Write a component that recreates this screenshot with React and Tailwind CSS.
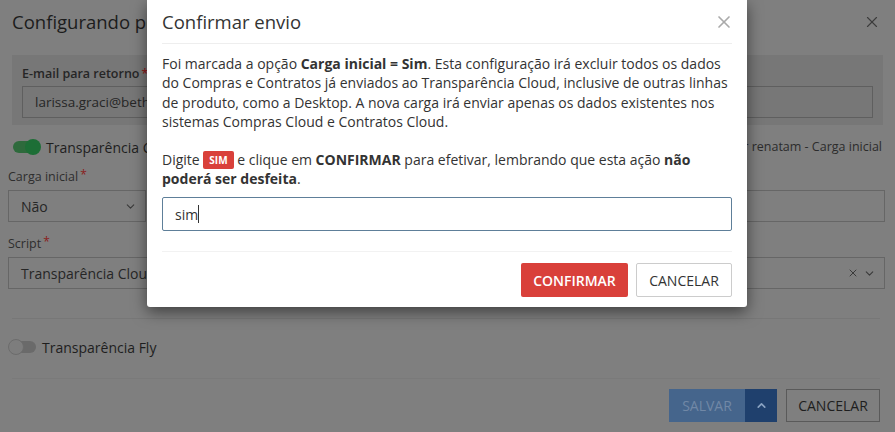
import { X, ChevronDown, ChevronUp } from 'lucide-react'

function Toggle({ on }) {
  return (
    <span className={`relative inline-flex items-center w-[26px] h-[12px] rounded-full ${on ? 'bg-[#2e6a3c]' : 'bg-[#6a6a6a]'}`}>
      <span className={`absolute top-1/2 -translate-y-1/2 w-[16px] h-[16px] rounded-full ${on ? 'right-[-2px] bg-[#1d6e36]' : 'left-[-2px] bg-[#7d7d7d] border border-[#6c6c6c]'}`} />
    </span>
  )
}

function Label({ children }) {
  return (
    <div className="text-[12.5px] text-[#2e2e2e] leading-[16px]">
      {children}
      <span className="text-[#8a2020] align-top text-[12px] leading-[12px] ml-[2px]">*</span>
    </div>
  )
}

export default function App() {
  return (
    <div className="relative w-[895px] h-[432px] overflow-hidden bg-[#7f7f7f] font-['Open_Sans',sans-serif]">
      {/* dimmed page behind the dialog */}
      <div className="flex items-center justify-between h-[44px] pl-3 pr-[14px]">
        <h1 className="text-[18.5px] text-[#1c1c1c] whitespace-nowrap">Configurando portal da transparência</h1>
        <X className="w-[18px] h-[18px] text-[#3c3c3c]" strokeWidth={1.5} />
      </div>

      <div className="mx-3 mt-[11px] bg-[#777777] px-[10px] pt-[11px] pb-[7px] w-[871px]">
        <div className="text-[12.5px] text-[#262626] font-semibold leading-[16px]">
          E-mail para retorno<span className="text-[#8a2020] align-top ml-[2px]">*</span>
        </div>
        <div className="mt-[4px] h-[32px] border border-[#5f5f5f] flex items-center px-[12px] text-[13.5px] text-[#262626]">
          larissa.graci@betha.com.br
        </div>
      </div>

      <div className="flex items-center justify-between pl-[13px] pr-[13px] mt-[14px] h-[16px]">
        <div className="flex items-center gap-[4px]">
          <Toggle on />
          <span className="ml-[3px] text-[14px] text-[#1e1e1e]">Transparência Cloud</span>
        </div>
        <span className="text-[12.5px] text-[#2c2c2c]">Última alteração por renatam - Carga inicial</span>
      </div>

      <div className="grid grid-cols-[138px_1fr] gap-x-[14px] pl-2 pr-[10px] mt-[14px]">
        <div>
          <Label>Carga inicial</Label>
          <div className="mt-[5px] h-[32px] border border-[#666] flex items-center justify-between pl-[12px] pr-[8px] text-[14px] text-[#262626]">
            Não
            <ChevronDown className="w-[13px] h-[13px] text-[#3a3a3a]" />
          </div>
        </div>
        <div>
          <Label>Situação</Label>
          <div className="mt-[5px] h-[32px] border border-[#666]" />
        </div>
      </div>

      <div className="pl-2 pr-[10px] mt-[14px]">
        <Label>Script</Label>
        <div className="mt-[5px] h-[32px] border border-[#666] flex items-center justify-between pl-[12px] pr-[8px] text-[14px] text-[#262626]">
          Transparência Cloud - Compras e Contratos
          <div className="flex items-center gap-[4px] text-[#3a3a3a]">
            <X className="w-[12px] h-[12px]" />
            <ChevronDown className="w-[13px] h-[13px]" />
          </div>
        </div>
      </div>

      <div className="mx-3 mt-[29px] border-t border-[#777] w-[868px]" />

      <div className="flex items-center pl-[10px] mt-[19px] h-[18px]">
        <Toggle />
        <span className="ml-[6px] text-[14px] text-[#1e1e1e]">Transparência Fly</span>
      </div>

      <div className="mx-3 mt-[22px] border-t border-[#7a7a7a] w-[868px]" />

      <div className="flex justify-end gap-[9px] pr-[15px] mt-[10px]">
        <div className="flex h-[33px]">
          <span className="w-[76px] bg-[#45658c] text-[#7188a6] text-[14px] flex items-center justify-center">SALVAR</span>
          <span className="w-[32px] bg-[#1f406d] flex items-center justify-center">
            <ChevronUp className="w-[13px] h-[13px] text-[#8aa3c2]" strokeWidth={3} />
          </span>
        </div>
        <span className="w-[94px] h-[33px] border border-[#5a5a5a] text-[#1e1e1e] text-[14px] flex items-center justify-center">CANCELAR</span>
      </div>

      {/* confirmation dialog */}
      <div className="absolute left-[147px] top-0 w-[600px] bg-white rounded-b-[3px] shadow-[0_5px_15px_rgba(0,0,0,0.5)] text-[#333]">
        <div className="mx-[15px] h-[44px] flex items-center justify-between border-b border-[#eee]">
          <h2 className="text-[18.5px] text-[#333]">Confirmar envio</h2>
          <X className="w-[20px] h-[20px] text-[#aaa] mr-[-2px]" strokeWidth={2} />
        </div>
        <div className="px-[15px] pt-[10px] text-[14px] leading-[19.4px]">
          <p>
            Foi marcada a opção <b>Carga inicial = Sim</b>. Esta configuração irá excluir todos os dados do Compras e
            Contratos já enviados ao Transparência Cloud, inclusive de outras linhas de produto, como a Desktop. A nova
            carga irá enviar apenas os dados existentes nos sistemas Compras Cloud e Contratos Cloud.
          </p>
          <p className="mt-[18px]">
            Digite{' '}
            <span className="inline-block bg-[#d9403a] text-white text-[10px] font-bold leading-[12px] py-[3px] px-[6px] rounded-[2px] align-[1px]">SIM</span>{' '}
            e clique em <b>CONFIRMAR</b> para efetivar, lembrando que esta ação <b>não poderá ser desfeita</b>.
          </p>
          <div className="mt-[9px] h-[34px] border border-[#5e7f99] rounded-[2px] flex items-center px-[12px] text-[14px] text-[#333]">
            sim<span className="w-px h-[18px] bg-[#333]" />
          </div>
        </div>
        <div className="mx-[15px] mt-[20px] border-t border-[#f2f2f2] pt-[11px] pb-[10px] flex justify-end gap-[8px]">
          <span className="w-[107px] h-[34px] bg-[#d9403a] rounded-[2px] text-white font-semibold text-[14px] flex items-center justify-center">CONFIRMAR</span>
          <span className="w-[96px] h-[34px] border border-[#ccc] rounded-[2px] text-[#333] text-[14px] flex items-center justify-center">CANCELAR</span>
        </div>
      </div>
    </div>
  )
}
